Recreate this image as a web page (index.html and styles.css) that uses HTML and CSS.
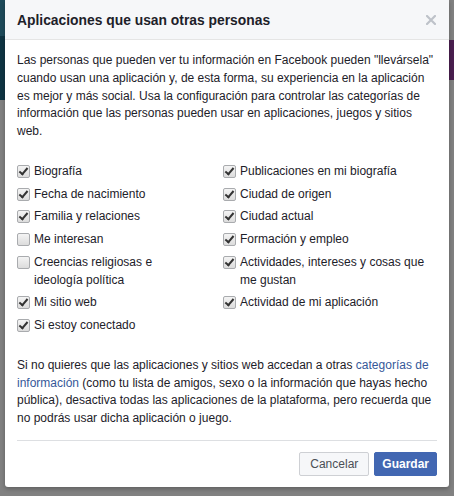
FILE: index.html
```html
<!DOCTYPE html>
<html lang="es">
<head>
<meta charset="utf-8">
<title>Aplicaciones que usan otras personas</title>
<link rel="stylesheet" href="styles.css">
</head>
<body>
<div class="dialog">
  <div class="header">
    <h2 class="title">Aplicaciones que usan otras personas</h2>
    <span class="close">
      <svg width="10" height="10" viewBox="0 0 10 10"><path d="M1 1L9 9M9 1L1 9" stroke="#bec2c9" stroke-width="2.2" stroke-linecap="square"/></svg>
    </span>
  </div>
  <div class="body">
    <p class="intro">Las personas que pueden ver tu información en Facebook pueden "llevársela" cuando usan una aplicación y, de esta forma, su experiencia en la aplicación es mejor y más social. Usa la configuración para controlar las categorías de información que las personas pueden usar en aplicaciones, juegos y sitios web.</p>
    <div class="checks">
      <label class="item"><span class="box on"></span><span class="txt">Biografía</span></label>
      <label class="item"><span class="box on"></span><span class="txt">Publicaciones en mi biografía</span></label>
      <label class="item"><span class="box on"></span><span class="txt">Fecha de nacimiento</span></label>
      <label class="item"><span class="box on"></span><span class="txt">Ciudad de origen</span></label>
      <label class="item"><span class="box on"></span><span class="txt">Familia y relaciones</span></label>
      <label class="item"><span class="box on"></span><span class="txt">Ciudad actual</span></label>
      <label class="item"><span class="box"></span><span class="txt">Me interesan</span></label>
      <label class="item"><span class="box on"></span><span class="txt">Formación y empleo</span></label>
      <label class="item"><span class="box"></span><span class="txt">Creencias religiosas e<br>ideología política</span></label>
      <label class="item"><span class="box on"></span><span class="txt">Actividades, intereses y cosas que<br>me gustan</span></label>
      <label class="item"><span class="box on"></span><span class="txt">Mi sitio web</span></label>
      <label class="item"><span class="box on"></span><span class="txt">Actividad de mi aplicación</span></label>
      <label class="item"><span class="box on"></span><span class="txt">Si estoy conectado</span></label>
    </div>
    <p class="note">Si no quieres que las aplicaciones y sitios web accedan a otras <a class="link" href="#">categorías de información</a> (como tu lista de amigos, sexo o la información que hayas hecho pública), desactiva todas las aplicaciones de la plataforma, pero recuerda que no podrás usar dicha aplicación o juego.</p>
  </div>
  <div class="footer">
    <button class="btn cancel">Cancelar</button>
    <button class="btn save">Guardar</button>
  </div>
</div>
</body>
</html>
```
FILE: styles.css
```css
html, body {
  margin: 0;
  padding: 0;
}
body {
  width: 454px;
  height: 496px;
  overflow: hidden;
  background:
    linear-gradient(to bottom, #1e4a5a 0, #1e4a5a 36px, #0f3443 36px, #0f3443 100px, transparent 100px) left top / 5px 100% no-repeat,
    linear-gradient(to bottom, transparent 40px, #4a1f4f 40px, #4a1f4f 80px, transparent 80px) right top / 5px 100% no-repeat,
    #818181;
  font-family: "Liberation Sans", Arial, sans-serif;
  color: #1d2129;
}
.dialog {
  margin-left: 5px;
  width: 444px;
  background: #fff;
  border-radius: 0 0 3px 3px;
  box-shadow: 0 2px 4px rgba(0,0,0,0.25);
}
.header {
  height: 39px;
  border-bottom: 1px solid #e5e5e5;
  background: #f6f7f9;
  display: flex;
  align-items: center;
  justify-content: space-between;
  padding: 0 12px;
}
.title {
  margin: 0;
  font-size: 13.85px;
  font-weight: bold;
  color: #1d2129;
}
.close {
  display: flex;
  margin-right: 1px;
}
.body {
  padding: 12px 12px 0;
  font-size: 12px;
  line-height: 17.75px;
}
.intro {
  margin: 0 0 22px;
}
.checks {
  display: grid;
  grid-template-columns: 206px 1fr;
  row-gap: 5px;
}
.item {
  display: flex;
  align-items: flex-start;
}
.box {
  flex: none;
  width: 11px;
  height: 11px;
  margin: 2px 4px 0 0;
  border: 1px solid #a9abae;
  border-radius: 2px;
  background: linear-gradient(#f4f4f4, #dcdcdc);
  position: relative;
}
.box.on::after {
  content: "";
  position: absolute;
  left: 3px;
  top: 0px;
  width: 3px;
  height: 7px;
  border: solid #333;
  border-width: 0 2px 2px 0;
  transform: rotate(40deg);
}
.txt {
  color: #1d2129;
}
.note {
  margin: 22px 0 0;
}
.link {
  color: #365899;
  text-decoration: none;
}
.footer {
  margin: 12px 12px 0;
  border-top: 1px solid #dddfe2;
  padding: 11px 0 11px;
  display: flex;
  justify-content: flex-end;
  gap: 5px;
}
.btn {
  height: 24px;
  font-family: "Liberation Sans", Arial, sans-serif;
  font-size: 12px;
  border-radius: 2px;
  border: 1px solid;
}
.cancel {
  padding: 0 10px;
  background: #f6f7f9;
  border-color: #ced0d4;
  color: #4b4f56;
}
.save {
  padding: 0 7px;
  background: #4267b2;
  border-color: #4267b2;
  color: #fff;
  font-weight: bold;
}
```
